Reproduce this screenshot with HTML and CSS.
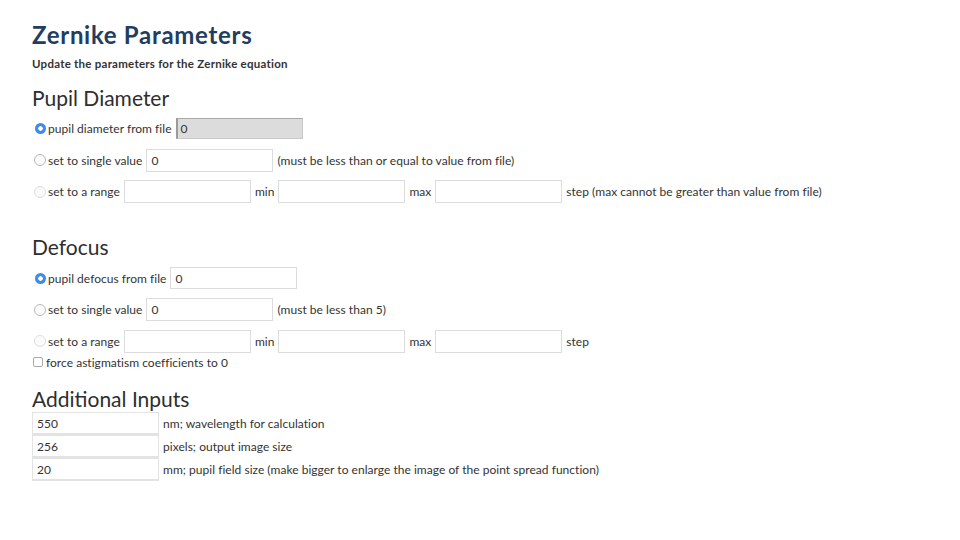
FILE: index.html
```html
<!DOCTYPE html>
<html>
<head>
<meta charset="utf-8">
<link rel="stylesheet" href="styles.css">
</head>
<body>
<div class="page">
  <h1 class="title">Zernike Parameters</h1>
  <p class="subtitle">Update the parameters for the Zernike equation</p>

  <h2 class="section">Pupil Diameter</h2>
  <div class="row">
    <span class="radio checked"></span><span class="lbl">pupil diameter from file</span>
    <span class="field readonly">0</span>
  </div>
  <div class="row">
    <span class="radio"></span><span class="lbl">set to single value</span>
    <span class="field">0</span>
    <span class="note">(must be less than or equal to value from file)</span>
  </div>
  <div class="row">
    <span class="radio faint"></span><span class="lbl">set to a range</span>
    <span class="field"></span>
    <span class="note">min</span>
    <span class="field"></span>
    <span class="note">max</span>
    <span class="field"></span>
    <span class="note">step (max cannot be greater than value from file)</span>
  </div>

  <h2 class="section defocus">Defocus</h2>
  <div class="row">
    <span class="radio checked"></span><span class="lbl">pupil defocus from file</span>
    <span class="field short">0</span>
  </div>
  <div class="row">
    <span class="radio"></span><span class="lbl">set to single value</span>
    <span class="field">0</span>
    <span class="note">(must be less than 5)</span>
  </div>
  <div class="row">
    <span class="radio faint"></span><span class="lbl">set to a range</span>
    <span class="field"></span>
    <span class="note">min</span>
    <span class="field"></span>
    <span class="note">max</span>
    <span class="field"></span>
    <span class="note">step</span>
  </div>
  <div class="check-row">
    <span class="checkbox"></span><span class="lbl">force astigmatism coefficients to 0</span>
  </div>

  <h2 class="section additional">Additional Inputs</h2>
  <div class="input-row">
    <span class="field wide">550</span>
    <span class="note">nm; wavelength for calculation</span>
  </div>
  <div class="input-row">
    <span class="field wide">256</span>
    <span class="note">pixels; output image size</span>
  </div>
  <div class="input-row">
    <span class="field wide">20</span>
    <span class="note">mm; pupil field size (make bigger to enlarge the image of the point spread function)</span>
  </div>
</div>
</body>
</html>
```

FILE: styles.css
```css
html, body {
  margin: 0;
  padding: 0;
  background: #ffffff;
}

body {
  font-family: Lato, "Open Sans", "Liberation Sans", sans-serif;
  color: #333333;
}

.page {
  padding: 20px 0 0 32px;
}

.title {
  margin: 0;
  font-size: 24px;
  line-height: 30px;
  font-weight: 700;
  color: #223d60;
  letter-spacing: 0.7px;
}

.subtitle {
  margin: 7px 0 0 0;
  font-size: 11.5px;
  line-height: 14px;
  font-weight: 700;
  letter-spacing: 0.25px;
  color: #333333;
}

.section {
  margin: 15px 0 0 0;
  font-size: 21px;
  line-height: 24px;
  font-weight: 400;
  color: #2e2e2e;
}

.section.defocus {
  margin-top: 27px;
}

.section.additional {
  margin-top: 20px;
  line-height: 20px;
}

.row {
  display: flex;
  align-items: center;
  height: 31.5px;
  margin-left: 2px;
  color: #333333;
}

.section + .row {
  margin-top: 3px;
}

.section.defocus + .row {
  margin-top: 4px;
}

.radio {
  box-sizing: border-box;
  width: 12px;
  height: 12px;
  border-radius: 50%;
  border: 1px solid #b9b9b9;
  background: #fbfbfb;
  flex: none;
  margin-right: 2px;
}

.radio.faint {
  border-color: #dedede;
}

.radio.checked {
  border: none;
  background: radial-gradient(circle, #ffffff 0 2px, #3b8cf2 2.5px);
  width: 11px;
  height: 11px;
  margin-left: 1px;
  margin-right: 2px;
}

.lbl,
.note {
  font-size: 12px;
  letter-spacing: 0.03px;
  color: #333333;
  white-space: nowrap;
}

.field {
  box-sizing: border-box;
  display: flex;
  align-items: center;
  width: 127px;
  height: 23px;
  margin: 0 4px 0 4px;
  padding: 0 4px;
  border: 1px solid #dcdcdc;
  background: #ffffff;
  font-size: 12px;
  color: #333333;
  flex: none;
}

.field.readonly {
  background: #dcdcdc;
  border-color: #c8c8c8;
  border-left: 2px solid #9a9a9a;
  border-top: 1px solid #a9a9a9;
  height: 21px;
  padding-left: 3px;
}

.field.short {
  height: 22px;
}

.check-row {
  display: flex;
  align-items: center;
  height: 14px;
  margin-top: -2px;
}

.checkbox {
  box-sizing: border-box;
  width: 10px;
  height: 10px;
  border: 1px solid #a8a8a8;
  border-radius: 2px;
  background: #ffffff;
  margin-left: 1px;
  margin-right: 3px;
  flex: none;
}

.input-row {
  display: flex;
  align-items: center;
  height: 23px;
}

.section.additional + .input-row {
  margin-top: 3px;
}

.field.wide {
  margin: 0 4px 0 0;
  border: 1px solid #e3e3e3;
  border-bottom-width: 2px;
}
```
